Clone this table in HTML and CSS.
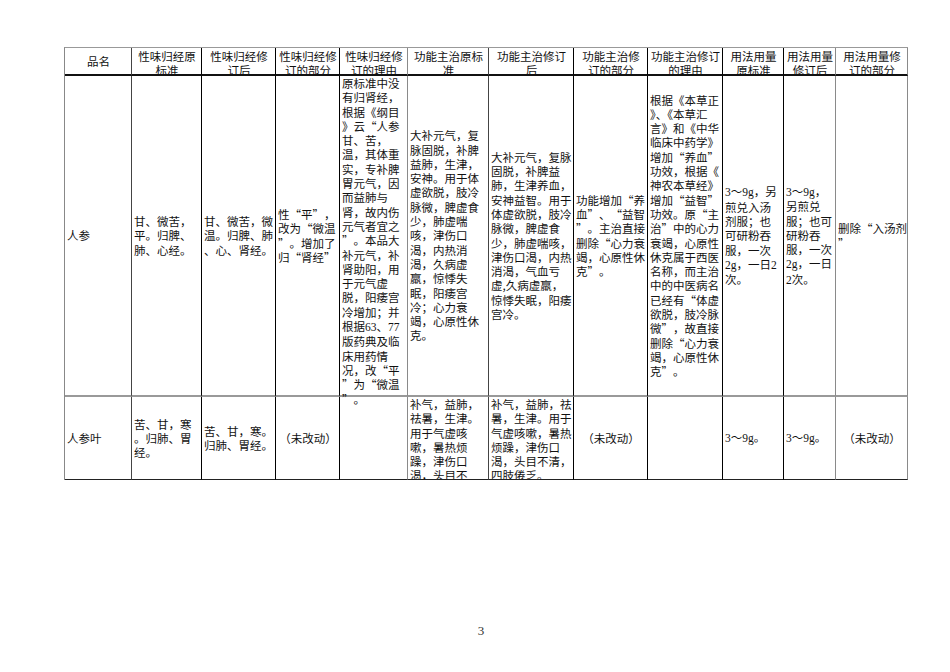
FILE: index.html
```html
<!DOCTYPE html>
<html lang="zh-CN">
<head>
<meta charset="utf-8">
<title>人参 修订对照表</title>
<link rel="stylesheet" href="styles.css">
</head>
<body>
<div class="page">
  <div class="sheet">
    <div class="c h hc g1"><div class="t">品名</div></div>
    <div class="c h d"><div class="t">性味归经原<br>标准</div></div>
    <div class="c h d"><div class="t">性味归经修<br>订后</div></div>
    <div class="c h d"><div class="t">性味归经修<br>订的部分</div></div>
    <div class="c h g"><div class="t">性味归经修<br>订的理由</div></div>
    <div class="c h g1"><div class="t">功能主治原标<br>准</div></div>
    <div class="c h d"><div class="t">功能主治修订<br>后</div></div>
    <div class="c h d"><div class="t">功能主治修<br>订的部分</div></div>
    <div class="c h d"><div class="t">功能主治修订<br>的理由</div></div>
    <div class="c h d"><div class="t">用法用量<br>原标准</div></div>
    <div class="c h g"><div class="t">用法用量<br>修订后</div></div>
    <div class="c h g"><div class="t">用法用量修<br>订的部分</div></div>

    <div class="c r1 g1"><div class="t">人参</div></div>
    <div class="c r1 d"><div class="t">甘、微苦，<br>平。归脾、<br>肺、心经。</div></div>
    <div class="c r1 d"><div class="t">甘、微苦，微<br>温。归脾、肺<br>、心、肾经。</div></div>
    <div class="c r1 d"><div class="t">性<i class="ql">“</i>平<i class="qr">”</i>，<br>改为<i class="ql">“</i>微温<br><i class="qr">”</i>。增加了<br>归<i class="ql">“</i>肾经<i class="qr">”</i></div></div>
    <div class="c r1 g top vis"><div class="t">原标准中没<br>有归肾经，<br>根据《纲目<br>》云<i class="ql">“</i>人参<br>甘、苦，<br>温，其体重<br>实，专补脾<br>胃元气，因<br>而益肺与<br>肾，故内伤<br>元气者宜之<br><i class="qr">”</i>。本品大<br>补元气，补<br>肾助阳，用<br>于元气虚<br>脱，阳痿宫<br>冷增加；并<br>根据<span class="lat">63</span>、<span class="lat">77</span><br>版药典及临<br>床用药情<br>况，改<i class="ql">“</i>平<br><i class="qr">”</i>为<i class="ql">“</i>微温<br><i class="qr">”</i>。</div></div>
    <div class="c r1 g1"><div class="t">大补元气，复<br>脉固脱，补脾<br>益肺，生津，<br>安神。用于体<br>虚欲脱，肢冷<br>脉微，脾虚食<br>少，肺虚喘<br>咳，津伤口<br>渴，内热消<br>渴，久病虚<br>羸，惊悸失<br>眠，阳痿宫<br>冷；心力衰<br>竭，心原性休<br>克。</div></div>
    <div class="c r1 d"><div class="t">大补元气，复脉<br>固脱，补脾益<br>肺，生津养血，<br>安神益智。用于<br>体虚欲脱，肢冷<br>脉微，脾虚食<br>少，肺虚喘咳，<br>津伤口渴，内热<br>消渴，气血亏<br>虚,久病虚羸，<br>惊悸失眠，阳痿<br>宫冷。</div></div>
    <div class="c r1 d"><div class="t">功能增加<i class="ql">“</i>养<br>血<i class="qr">”</i>、<i class="ql">“</i>益智<br><i class="qr">”</i>。主治直接<br>删除<i class="ql">“</i>心力衰<br>竭，心原性休<br>克<i class="qr">”</i>。</div></div>
    <div class="c r1 d"><div class="t">根据《本草正<br>》、《本草汇<br>言》和《中华<br>临床中药学》<br>增加<i class="ql">“</i>养血<i class="qr">”</i><br>功效，根据《<br>神农本草经》<br>增加<i class="ql">“</i>益智<i class="qr">”</i><br>功效。原<i class="ql">“</i>主<br>治<i class="qr">”</i>中的心力<br>衰竭，心原性<br>休克属于西医<br>名称，而主治<br>中的中医病名<br>已经有<i class="ql">“</i>体虚<br>欲脱，肢冷脉<br>微<i class="qr">”</i>，故直接<br>删除<i class="ql">“</i>心力衰<br>竭，心原性休<br>克<i class="qr">”</i>。</div></div>
    <div class="c r1 d"><div class="t"><span class="lat">3</span>～<span class="lat">9g</span>，另<br>煎兑入汤<br>剂服；也<br>可研粉吞<br>服，一次<br><span class="lat">2g</span>，一日<span class="lat">2</span><br>次。</div></div>
    <div class="c r1 g"><div class="t"><span class="lat">3</span>～<span class="lat">9g</span>，<br>另煎兑<br>服；也可<br>研粉吞<br>服，一次<br><span class="lat">2g</span>，一日<br><span class="lat">2</span>次。</div></div>
    <div class="c r1 g"><div class="t">删除<i class="ql">“</i>入汤剂<br><i class="qr">”</i></div></div>

    <div class="c r2 g1"><div class="t">人参叶</div></div>
    <div class="c r2 d"><div class="t">苦、甘，寒<br>。归肺、胃<br>经。</div></div>
    <div class="c r2 d"><div class="t">苦、甘，寒。<br>归肺、胃经。</div></div>
    <div class="c r2 d ctr"><div class="t">（未改动）</div></div>
    <div class="c r2 g"><div class="t"></div></div>
    <div class="c r2 g1 top"><div class="t">补气，益肺，<br>祛暑，生津。<br>用于气虚咳<br>嗽，暑热烦<br>躁，津伤口<br>渴，头目不<br>清，四肢倦<br>乏。</div></div>
    <div class="c r2 d top"><div class="t">补气，益肺，祛<br>暑，生津。用于<br>气虚咳嗽，暑热<br>烦躁，津伤口<br>渴，头目不清，<br>四肢倦乏。</div></div>
    <div class="c r2 d ctr"><div class="t">（未改动）</div></div>
    <div class="c r2 d"><div class="t"></div></div>
    <div class="c r2 d"><div class="t"><span class="lat">3</span>～<span class="lat">9g</span>。</div></div>
    <div class="c r2 g"><div class="t"><span class="lat">3</span>～<span class="lat">9g</span>。</div></div>
    <div class="c r2 g ctr"><div class="t">（未改动）</div></div>
  </div>
</div>
<div class="pn">3</div>
</body>
</html>
```

FILE: styles.css
```css
body {
  margin: 0;
  background: #fff;
  color: #000;
  font-family: "Noto Sans CJK SC", sans-serif;
}

.page {
  padding: 47px 0 0 64px;
}

.sheet {
  display: grid;
  grid-template-columns: 67px 70px 74px 64px 68px 81px 85px 74px 75px 61px 52px 72px;
  grid-template-rows: 28px 321px 83px;
  width: max-content;
  border-top: 1px solid #999;
  border-left: 1px solid #888;
  font-size: 11.5px;
  line-height: 14.3px;
  color: #111;
}

.c {
  box-sizing: border-box;
  display: flex;
  flex-direction: column;
  justify-content: center;
  padding: 0 1px 0 2px;
  overflow: hidden;
  white-space: nowrap;
  border-right: 1px solid #000;
}

.c.d { border-right-color: #000; }
.c.g { border-right-color: #8a8a8a; }
.c.g1 { border-right-color: #444; }

.h {
  border-bottom: 2px solid #111;
  text-align: center;
  justify-content: flex-start;
  padding-top: 1px;
}

.h.hc {
  justify-content: center;
  padding-top: 0;
}

.r1 {
  border-bottom: 2px solid #999;
}

.r2 {
  border-bottom: 1px solid #222;
}

.top {
  justify-content: flex-start;
}

.vis {
  overflow: visible;
}

.ctr {
  text-align: center;
}

.ql,
.qr {
  display: inline-block;
  width: 1em;
  font-style: normal;
}

.ql {
  text-align: right;
}

.qr {
  text-align: left;
}

.lat {
  font-family: "Liberation Serif", serif;
}

.pn {
  margin-top: 143px;
  padding-left: 12px;
  text-align: center;
  font-family: "Liberation Serif", serif;
  font-size: 13px;
  line-height: 16px;
  color: #333;
}
```
